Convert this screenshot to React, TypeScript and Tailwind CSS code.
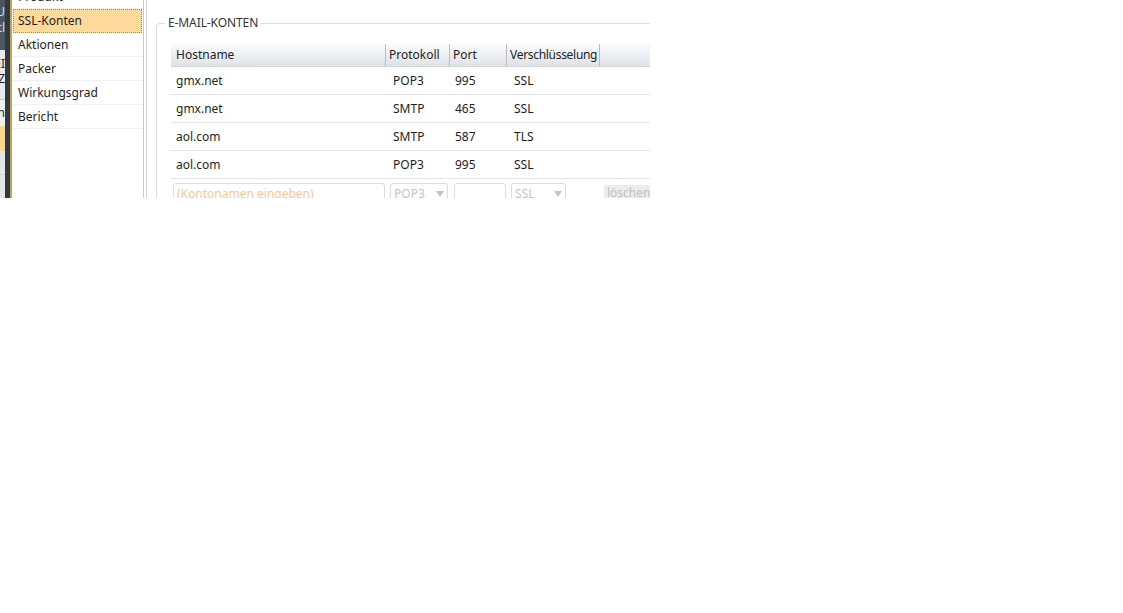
import React from 'react';

const rows = [
  { host: 'gmx.net', proto: 'POP3', port: '995', enc: 'SSL' },
  { host: 'gmx.net', proto: 'SMTP', port: '465', enc: 'SSL' },
  { host: 'aol.com', proto: 'SMTP', port: '587', enc: 'TLS' },
  { host: 'aol.com', proto: 'POP3', port: '995', enc: 'SSL' },
];

const navItems = ['Aktionen', 'Packer', 'Wirkungsgrad', 'Bericht'];

function Caret() {
  return (
    <svg width="8" height="6" viewBox="0 0 8 6" className="shrink-0">
      <path d="M0 0 L8 0 L4 6 Z" fill="#c4c4c4" />
    </svg>
  );
}

export default function App() {
  return (
    <div className="w-[1123px] h-[613px] bg-white" style={{ fontFamily: '"Noto Sans", "Open Sans", sans-serif' }}>
      <div className="flex w-[650px] h-[198px] overflow-hidden text-[12px] text-[#1e1e1e]">
        {/* left edge of another window */}
        <div className="w-[5px] shrink-0 flex flex-col overflow-hidden">
          <div className="h-[50px] bg-[#4c5661] flex flex-col items-end pt-[4px] text-[#d9dde2] leading-[16px]">
            <span>U</span>
            <span>tl</span>
          </div>
          <div className="h-[50px] bg-[#e9eaec] flex flex-col items-end pt-[6px] leading-[15px] border-b border-[#c9ccd0]">
            <span>EI</span>
            <span>Z</span>
          </div>
          <div className="h-[26px] bg-[#eeeff1] flex justify-end items-center">h</div>
          <div className="h-[25px] bg-[#fbd691]" />
          <div className="h-[24px] bg-[#e5e6e8] border-b border-[#cfd2d6]" />
          <div className="flex-1 bg-[#e5e6e8]" />
        </div>
        <div className="w-[5px] shrink-0 bg-[#2d3a45]" />
        <div className="w-[2px] shrink-0 bg-[#c9a04c]" />

        {/* nav list */}
        <div className="w-[131px] shrink-0 flex flex-col mt-[-15px] bg-white">
          <div className="h-[24px] px-[6px] flex items-center border-b border-[#f0f0f0]">Produkt</div>
          <div className="h-[24px] px-[4px] mx-[1px] flex items-center bg-[#fdd99b] border border-dotted border-[#a8885a]">SSL-Konten</div>
          {navItems.map((n) => (
            <div key={n} className="h-[24px] px-[6px] flex items-center border-b border-[#f0f0f0]">
              {n}
            </div>
          ))}
        </div>
        <div className="w-[1px] shrink-0 bg-[#c8c8c8]" />
        <div className="w-[2px] shrink-0 bg-white" />
        <div className="w-[1px] shrink-0 bg-[#d4d4d4]" />

        {/* main */}
        <div className="flex-1 min-w-0 pl-[9px] pt-[15px]">
          <div className="relative w-[600px] h-[300px] border border-[#dcdcdc] rounded-[4px] mt-[8px] pl-[14px] pt-[20px]">
            <div className="absolute left-[8px] top-[-9px] bg-white px-[3px] text-[#333] leading-[16px] tracking-[-0.1px]">
              E-MAIL-KONTEN
            </div>
            <div className="w-[560px]">
              <div className="flex h-[23px] rounded-tl-[4px] border-b border-[#d3d7dc] bg-gradient-to-b from-[#fafbfc] to-[#dfe3e8] text-[#1e1e1e]">
                <div className="w-[215px] px-[5px] flex items-center border-r border-[#b9bdc2]">Hostname</div>
                <div className="w-[64px] px-[3px] flex items-center border-r border-[#b9bdc2]">Protokoll</div>
                <div className="w-[57px] px-[3px] flex items-center border-r border-[#b9bdc2]">Port</div>
                <div className="w-[93px] px-[3px] flex items-center border-r border-[#b9bdc2] tracking-[-0.3px]">Verschlüsselung</div>
                <div className="flex-1" />
              </div>
              {rows.map((r, i) => (
                <div key={i} className="flex h-[28px] items-center border-b border-[#e4e4e4]">
                  <div className="w-[215px] pl-[5px]">{r.host}</div>
                  <div className="w-[64px] pl-[7px]">{r.proto}</div>
                  <div className="w-[57px] pl-[5px]">{r.port}</div>
                  <div className="w-[93px] pl-[7px]">{r.enc}</div>
                </div>
              ))}
              <div className="flex items-start pt-[4px] h-[28px]">
                <div className="w-[212px] ml-[2px] h-[22px] border border-[#dcdcdc] rounded-[3px] px-[3px] flex items-center text-[#f7c98f]">
                  (Kontonamen eingeben)
                </div>
                <div className="w-[58px] ml-[5px] h-[22px] border border-[#dcdcdc] rounded-[3px] px-[3px] flex items-center justify-between text-[#c4c4c4]">
                  POP3 <Caret />
                </div>
                <div className="w-[52px] ml-[6px] h-[22px] border border-[#dcdcdc] rounded-[3px]" />
                <div className="w-[55px] ml-[5px] h-[22px] border border-[#dcdcdc] rounded-[3px] px-[3px] flex items-center justify-between text-[#c4c4c4]">
                  SSL <Caret />
                </div>
                <div className="ml-[38px] h-[16px] mt-[2px] px-[3px] bg-[#ececec] text-[#c0c0c0] flex items-center">löschen</div>
              </div>
            </div>
          </div>
        </div>
      </div>
    </div>
  );
}
